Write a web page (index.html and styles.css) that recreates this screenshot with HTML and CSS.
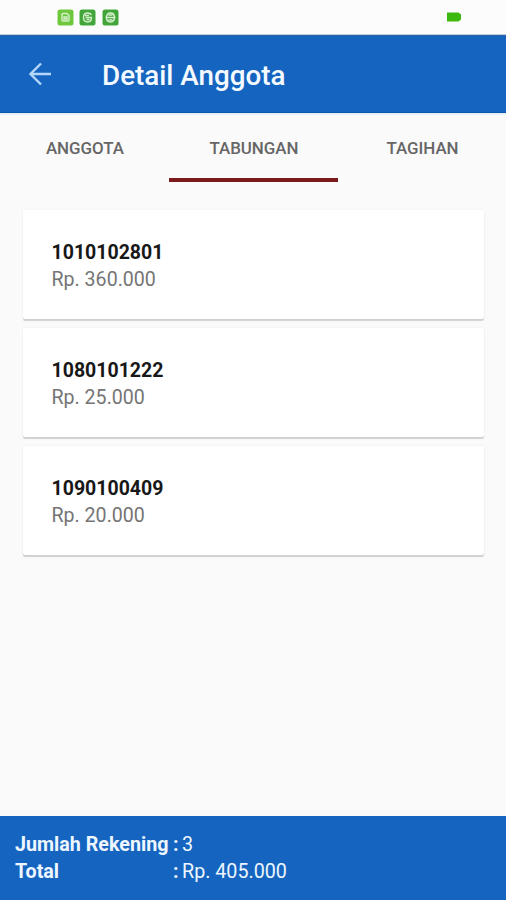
FILE: index.html
```html
<!DOCTYPE html>
<html lang="id">
<head>
<meta charset="utf-8">
<title>Detail Anggota</title>
<link rel="stylesheet" href="styles.css">
</head>
<body>
<div class="screen">
  <div class="status">
    <div class="notes">
      <svg class="note light" viewBox="0 0 17 17"><rect x=".5" y=".5" width="16" height="16" rx="2.5"/><path d="M5 5.500q0-1 1-1h4l2 2v4.500q0 1-1 1h-5q-1 0-1-1zM7 8h3v2H7z"/></svg>
      <svg class="note" viewBox="0 0 17 17"><rect x=".5" y=".5" width="16" height="16" rx="2.5"/><path d="M12.500 6q-1-2-4-2-4 0-4 4.500t4 4.500q4 0 4-4.500H6.500M6 6.500h4M7.500 10.500h3"/></svg>
      <svg class="note" viewBox="0 0 17 17"><rect x=".5" y=".5" width="16" height="16" rx="2.5"/><path d="M4.500 8.500q0-4.500 4-4.500t4 4.500-4 4.500-4-4.500zM3.500 8.500h10M6.500 6h4M6.500 11h4"/></svg>
    </div>
    <svg class="battery" viewBox="0 0 16 10"><path d="M1 .5h11.500l2.500 2v5l-2.500 2H1z"/></svg>
  </div>
  <header class="bar">
    <svg class="back" viewBox="0 0 24 24"><path d="M23 12H3M13 1.500 2.500 12 13 22.500"/></svg>
    <h1>Detail Anggota</h1>
  </header>
  <nav class="tabs">
    <div class="tab">ANGGOTA</div>
    <div class="tab active">TABUNGAN</div>
    <div class="tab">TAGIHAN</div>
  </nav>
  <main class="list">
    <section class="card"><b>1010102801</b><span>Rp. 360.000</span></section>
    <section class="card"><b>1080101222</b><span>Rp. 25.000</span></section>
    <section class="card"><b>1090100409</b><span>Rp. 20.000</span></section>
  </main>
  <footer class="summary">
    <b>Jumlah Rekening</b><b>:</b><span>3</span>
    <b>Total</b><b>:</b><span>Rp. 405.000</span>
  </footer>
</div>
</body>
</html>
```
FILE: styles.css
```css
* { box-sizing: border-box; }
body { margin: 0; font-family: Roboto, "Liberation Sans", sans-serif; background: #fafafa; }
.screen { display: flex; flex-direction: column; height: 900px; width: 506px; }
.status { height: 35px; display: flex; justify-content: space-between; align-items: center; padding: 0 44px 0 56.5px; background: #fcfcfc; border-bottom: 1px solid #bdd0e6; }
.notes { display: flex; gap: 5.5px; }
.note { width: 17px; height: 17px; fill: #42a53a; }
.note.light { fill: #6fc83c; }
.note path { fill: none; stroke: #d4efcb; stroke-width: 1.4; }
.battery { width: 16px; height: 10px; fill: #3db80c; }
.bar { height: 78px; display: flex; align-items: center; padding: 3px 0 0 28px; background: #1565c0; border-top: 1px solid #2a62a4; border-bottom: 1px solid #0e56ab; }
.back { width: 24px; height: 24px; margin-top: -4px; fill: none; stroke: #b4d6f9; stroke-width: 2.4; }
h1 { margin: 0 0 0 50px; font-size: 27.8px; line-height: 34px; font-weight: 500; color: #f4faff; }
.tabs { height: 69px; display: grid; grid-template-columns: 169px 169px 168px; border-top: 2px solid #e8eff8; }
.tab { padding: 22px 0 0 1px; text-align: center; font-size: 16.9px; line-height: 22px; font-weight: 500; color: #666; }
.tab.active { border-bottom: 4px solid #7b1a1d; }
.list { flex: 1; display: flex; flex-direction: column; gap: 9px; padding: 28px 22px 0 23px; }
.card { height: 109px; display: flex; flex-direction: column; padding: 29px 28px 0 28.500px; background: #fff; border-radius: 2px; box-shadow: 0 2px 1px #d0d0d0, 0 0 2px #e8e8e8; font-size: 19.6px; line-height: 27px; }
.card b { color: #181818; font-size: 19.5px; }
.card span { color: #757575; }
.summary { height: 84px; display: grid; grid-template-columns: 158px 9px 1fr; grid-auto-rows: 27px; padding: 15px 15px 0; background: #1565c0; color: #eef6ff; font-size: 19.7px; line-height: 27px; white-space: nowrap; }
```
